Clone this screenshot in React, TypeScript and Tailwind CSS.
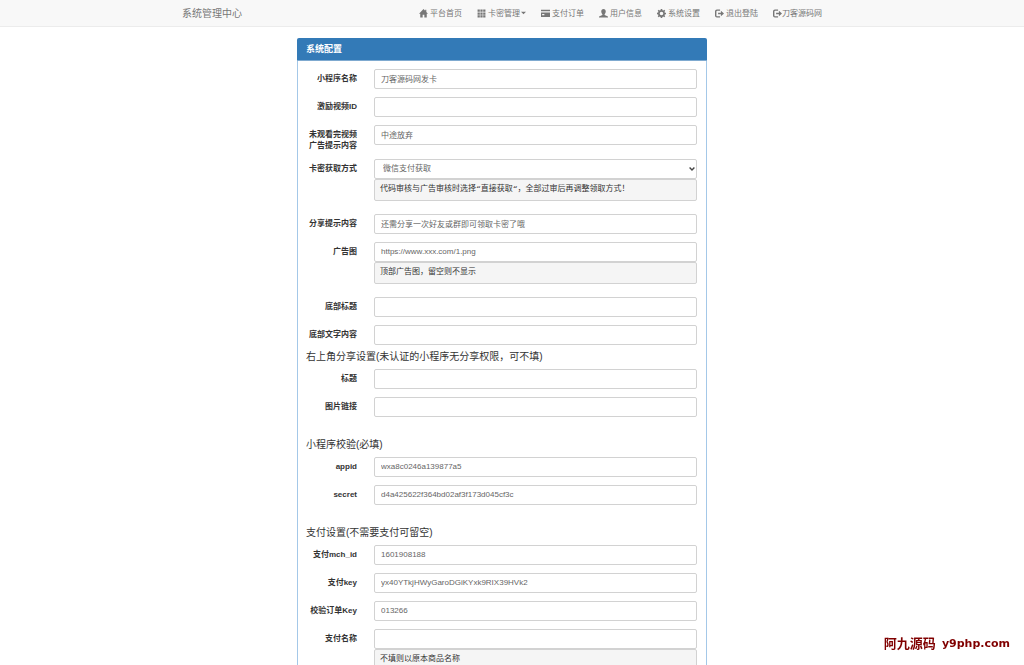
import { Fragment, useState } from "react";
import type { ReactNode } from "react";

interface Field {
  id: string;
  label: string;
  value?: string;
  options?: string[];
  help?: string;
}

interface Section {
  title?: string;
  fields: Field[];
}

const sections: Section[] = [
  {
    fields: [
      { id: "name", label: "小程序名称", value: "刀客源码网发卡" },
      { id: "video", label: "激励视频ID" },
      { id: "unwatched", label: "未观看完视频广告提示内容", value: "中途放弃" },
      {
        id: "method",
        label: "卡密获取方式",
        options: ["微信支付获取", "直接获取"],
        help: "代码审核与广告审核时选择“直接获取“，全部过审后再调整领取方式！",
      },
      { id: "share", label: "分享提示内容", value: "还需分享一次好友或群即可领取卡密了哦" },
      { id: "banner", label: "广告图", value: "https://www.xxx.com/1.png", help: "顶部广告图，留空则不显示" },
      { id: "footTitle", label: "底部标题" },
      { id: "footText", label: "底部文字内容" },
    ],
  },
  {
    title: "右上角分享设置(未认证的小程序无分享权限，可不填)",
    fields: [
      { id: "shareTitle", label: "标题" },
      { id: "shareImage", label: "图片链接" },
    ],
  },
  {
    title: "小程序校验(必填)",
    fields: [
      { id: "appid", label: "appid", value: "wxa8c0246a139877a5" },
      { id: "secret", label: "secret", value: "d4a425622f364bd02af3f173d045cf3c" },
    ],
  },
  {
    title: "支付设置(不需要支付可留空)",
    fields: [
      { id: "mchId", label: "支付mch_id", value: "1601908188" },
      { id: "payKey", label: "支付key", value: "yx40YTkjHWyGaroDGiKYxk9RIX39HVk2" },
      { id: "orderKey", label: "校验订单Key", value: "013266" },
      { id: "payName", label: "支付名称", help: "不填则以原本商品名称" },
    ],
  },
];

function Icon({ children }: { children: ReactNode }) {
  return (
    <svg viewBox="0 0 16 16" className="size-[9px] shrink-0" fill="currentColor" aria-hidden="true">
      {children}
    </svg>
  );
}

const HomeIcon = () => (
  <Icon>
    <path d="M8 0 0 8.5h2.2V15h4.3v-5h3v5h4.3V8.5H16L13 5.3V1.5h-2v1.7z" />
  </Icon>
);

const GridIcon = () => (
  <Icon>
    <path d="M1 1h4v4H1zM6 1h4v4H6zM11 1h4v4h-4zM1 6h4v4H1zM6 6h4v4H6zM11 6h4v4h-4zM1 11h4v4H1zM6 11h4v4H6zM11 11h4v4h-4z" />
  </Icon>
);

const CardIcon = () => (
  <Icon>
    <path fillRule="evenodd" d="M0 1.5h16V4H0zM0 6h16v8H0zM2 9v2h4V9z" />
  </Icon>
);

const UserIcon = () => (
  <Icon>
    <path d="M8 0c2.700 0 4 1.800 4 4.300 0 2-1 4-2 4.900v1.300l5 2.300c.7.300 1 .8 1 1.500V15H0v-.7c0-.7.300-1.200 1-1.500l5-2.300V9.200C5 8.300 4 6.300 4 4.300 4 1.800 5.300 0 8 0z" />
  </Icon>
);

const CogIcon = () => (
  <Icon>
    <path
      fillRule="evenodd"
      d="M6.700 0h2.600l.4 2.100 1.500.6L13 1.500 14.600 3.200l-1.300 1.700.6 1.600 2.100.3v2.500l-2.100.4-.6 1.500 1.300 1.800-1.700 1.700-1.800-1.300-1.500.6L9.200 16H6.700l-.4-2-1.500-.6L3 14.700 1.300 13l1.300-1.800L2 9.700l-2-.4V6.800l2-.4.6-1.500L1.300 3.100 3 1.400l1.800 1.200L6.300 2zM8 4.800a3.200 3.200 0 1 0 0 6.400 3.200 3.200 0 0 0 0-6.400z"
    />
  </Icon>
);

const LogoutIcon = () => (
  <Icon>
    <path d="M9 1v2H4Q2.500 3 2.500 4.500v7Q2.500 13 4 13h5v2H3.500Q0 15 0 12V4q0-3 3.500-3zM10.500 3 16 8l-5.500 5V9.500h-5v-3h5z" />
  </Icon>
);

const navItems = [
  { text: "平台首页", icon: <HomeIcon /> },
  { text: "卡密管理", icon: <GridIcon />, caret: true },
  { text: "支付订单", icon: <CardIcon /> },
  { text: "用户信息", icon: <UserIcon /> },
  { text: "系统设置", icon: <CogIcon /> },
  { text: "退出登陆", icon: <LogoutIcon /> },
  { text: "刀客源码网", icon: <LogoutIcon />, tight: true },
];

const controlClass =
  "block h-5 w-full rounded-xs border border-[#d2d2d2] bg-white pb-0.5 text-[8px] text-[#666] focus:border-[#66afe9] focus:outline-none";

function FormRow({ field }: { field: Field }) {
  const [value, setValue] = useState(field.value ?? field.options?.[0] ?? "");

  return (
    <div className="flex gap-[17px]">
      <label htmlFor={field.id} className="w-[51px] shrink-0 pt-1 text-right font-bold break-all">
        {field.label}
      </label>
      <div className="min-w-0 flex-1">
        {field.options ? (
          <div className="relative">
            <select
              id={field.id}
              value={value}
              onChange={(e) => setValue(e.target.value)}
              className={`${controlClass} appearance-none px-2`}
            >
              {field.options.map((option) => (
                <option key={option}>{option}</option>
              ))}
            </select>
            <svg
              viewBox="0 0 6 4"
              className="pointer-events-none absolute top-2 right-0.5 h-1 w-1.5"
              fill="none"
              stroke="#444"
              strokeWidth="1.4"
              aria-hidden="true"
            >
              <path d="M.6.6 3 3 5.400.6" />
            </svg>
          </div>
        ) : (
          <input
            id={field.id}
            type="text"
            value={value}
            onChange={(e) => setValue(e.target.value)}
            className={`${controlClass} px-1.5`}
          />
        )}
        {field.help && (
          <pre className="mb-[5px] h-[22px] overflow-hidden rounded-xs border border-[#d2d2d2] bg-[#f5f5f5] px-[5px] font-['Liberation_Mono','Noto_Sans_CJK_SC',monospace] leading-[18px]">
            {field.help}
          </pre>
        )}
      </div>
    </div>
  );
}

export default function App() {
  return (
    <div className="min-h-screen bg-white font-['Liberation_Sans','Noto_Sans_CJK_SC',sans-serif] text-[8px] leading-[11px] text-[#333]">
      {/* Barre de navigation */}
      <header className="border-b border-[#ececec] bg-[#f8f8f8] pr-5 text-[#777]">
        <div className="mx-auto flex h-[26px] max-w-[640px] items-center justify-between">
          <a href="#" className="text-[10px]">
            系统管理中心
          </a>
          <nav className="flex gap-[15px]">
            {navItems.map((item) => (
              <a key={item.text} href="#" className="flex items-center whitespace-nowrap">
                {item.icon}
                <span className={item.tight ? "" : "ml-0.5"}>{item.text}</span>
                {item.caret && (
                  <svg viewBox="0 0 6 4" className="ml-px h-1 w-[5px]" fill="currentColor" aria-hidden="true">
                    <path d="M0 .5h6L3 3.500z" />
                  </svg>
                )}
              </a>
            ))}
          </nav>
        </div>
      </header>

      {/* Formulaire de configuration */}
      <main className="pt-[11px] pr-5">
        <div className="mx-auto max-w-[410px] rounded-sm border border-[#a4c8e8]">
          <h3 className="-mx-px -mt-px rounded-t-xs border-b border-[#7faad0] bg-[#337ab7] px-[9px] py-1 text-[9px] leading-[14px] font-bold text-white">
            系统配置
          </h3>
          <form className="pt-2 pr-[9px] pb-2 pl-2" onSubmit={(e) => e.preventDefault()}>
            {sections.map((section, i) => (
              <Fragment key={i}>
                {section.title && (
                  <h4 className={`text-[10px] leading-6 ${i > 1 ? "mt-4" : ""}`}>{section.title}</h4>
                )}
                <div className="flex flex-col gap-2">
                  {section.fields.map((field) => (
                    <FormRow key={field.id} field={field} />
                  ))}
                </div>
              </Fragment>
            ))}
          </form>
        </div>
      </main>

      <div className="fixed right-[14px] bottom-3 flex items-center gap-1.5 leading-[18px] font-bold text-[#800000]">
        <span className="text-[13px]">阿九源码</span>
        <span className="font-['DejaVu_Sans',sans-serif] text-[11px]">y9php.com</span>
      </div>
    </div>
  );
}
